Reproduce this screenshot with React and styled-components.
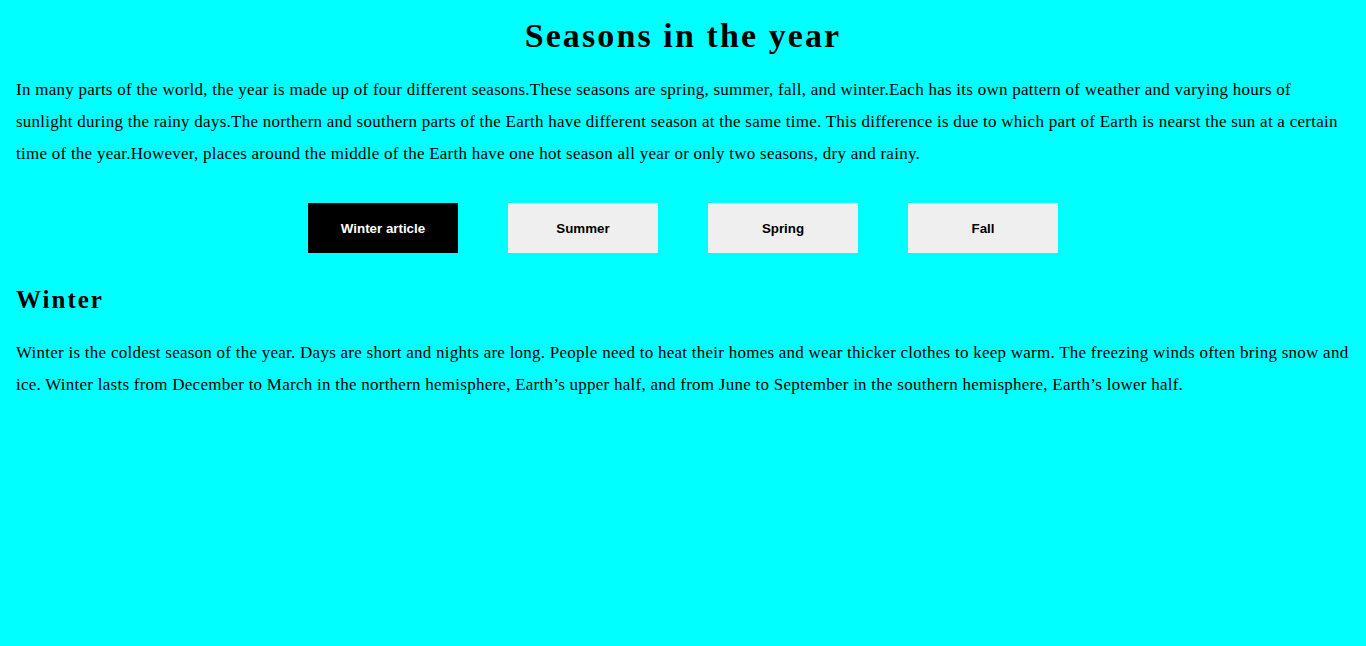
import React, { useState } from "react";
import styled, { createGlobalStyle } from "styled-components";

const GlobalStyle = createGlobalStyle`
  html, body { margin: 0; padding: 0; background: #00ffff; }
  body { font-family: Georgia, "Liberation Serif", serif; color: #000; }
`;

const seasons = [
  { key: "winter", label: "Winter article", title: "Winter", text: "Winter is the coldest season of the year. Days are short and nights are long. People need to heat their homes and wear thicker clothes to keep warm. The freezing winds often bring snow and ice. Winter lasts from December to March in the northern hemisphere, Earth\u2019s upper half, and from June to September in the southern hemisphere, Earth\u2019s lower half." },
  { key: "summer", label: "Summer", title: "Summer", text: "Summer is the warmest season of the year. Days are long and nights are short." },
  { key: "spring", label: "Spring", title: "Spring", text: "Spring comes after winter. The weather gets warmer and plants begin to grow." },
  { key: "fall", label: "Fall", title: "Fall", text: "Fall comes after summer. The weather gets cooler and leaves change colour." },
];

export default function App() {
  const [active, setActive] = useState("winter");
  const current = seasons.find((s) => s.key === active);

  return (
    <>
      <GlobalStyle />
      <Page>
        <Title>Seasons in the year</Title>
        <Intro>
          In many parts of the world, the year is made up of four different seasons.These seasons are spring, summer, fall, and winter.Each has its own pattern of weather and varying hours of sunlight during the rainy days.The northern and southern parts of the Earth have different season at the same time. This difference is due to which part of Earth is nearst the sun at a certain time of the year.However, places around the middle of the Earth have one hot season all year or only two seasons, dry and rainy.
        </Intro>
        <Tabs>
          {seasons.map((s) => (
            <Tab key={s.key} $active={s.key === active} onClick={() => setActive(s.key)}>
              {s.label}
            </Tab>
          ))}
        </Tabs>
        <Article>
          <SectionTitle>{current.title}</SectionTitle>
          <Body>{current.text}</Body>
        </Article>
      </Page>
    </>
  );
}

const Page = styled.div`
  padding: 16px 16px;
  min-height: 646px;
  box-sizing: border-box;
`;

const Title = styled.h1`
  margin: 0;
  text-align: center;
  font-size: 34px;
  line-height: 40px;
  letter-spacing: 2.1px;
  font-weight: bold;
`;

const Intro = styled.p`
  margin: 18px 0 0;
  font-size: 17px;
  line-height: 32px;
  letter-spacing: 0.25px;
`;

const Tabs = styled.div`
  display: flex;
  justify-content: center;
  gap: 50px;
  margin-top: 33px;
`;

const Tab = styled.button`
  width: 150px;
  height: 50px;
  padding: 0;
  border: none;
  border-radius: 0;
  cursor: pointer;
  font-family: "Liberation Sans", Arial, sans-serif;
  font-size: 13.33px;
  font-weight: bold;
  background: ${(p) => (p.$active ? "#000" : "#efefef")};
  color: ${(p) => (p.$active ? "#fff" : "#000")};
`;

const Article = styled.div`
  margin-top: 32px;
`;

const SectionTitle = styled.h2`
  margin: 0;
  font-size: 25px;
  line-height: 30px;
  letter-spacing: 2px;
  font-weight: bold;
`;

const Body = styled.p`
  margin: 22px 0 0;
  font-size: 17px;
  line-height: 32px;
  letter-spacing: 0.25px;
`;
